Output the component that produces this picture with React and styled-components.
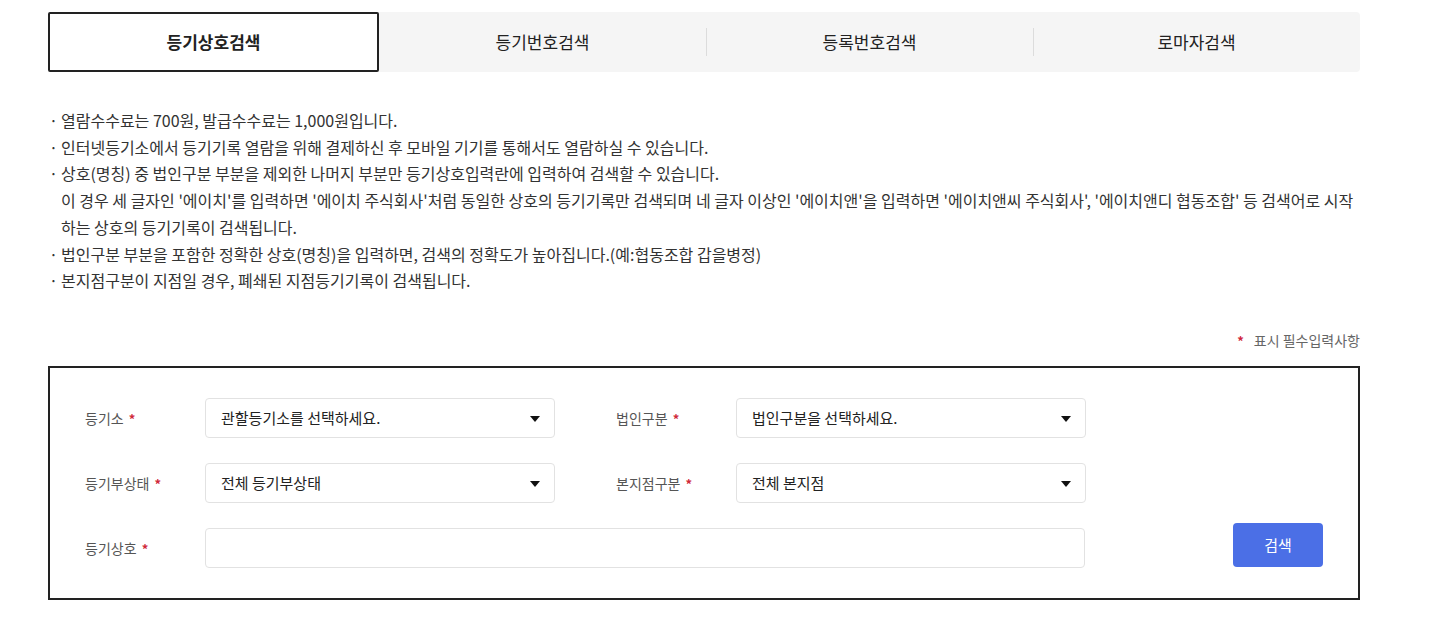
import React from "react";
import styled, { createGlobalStyle } from "styled-components";

const GlobalStyle = createGlobalStyle`
    body {
        margin: 0;
        background: #fff;
        font-family: "Noto Sans CJK KR", "Noto Sans", sans-serif;
        color: #333;
    }
`;

const Page = styled.div`
    width: 1312px;
    padding: 12px 0 0 48px;
`;

const TabBar = styled.div`
    display: flex;
    height: 60px;
    background: #f5f5f5;
    border-radius: 4px;
`;

const Tab = styled.div`
    flex: 1;
    display: flex;
    align-items: center;
    justify-content: center;
    position: relative;
    font-size: 17px;
    color: #222;
    box-sizing: border-box;
    padding-bottom: 2px;
    ${({ $active }) => $active && `
        background: #fff;
        border: 2px solid #222;
        border-radius: 2px;
        font-weight: 700;
        flex: 0 0 331px;
    `}
    ${({ $divider }) => $divider && `
        &::before {
            content: "";
            position: absolute;
            left: 0;
            top: 16px;
            bottom: 16px;
            width: 1px;
            background: #dcdcdc;
        }
    `}
`;

const Notes = styled.ul`
    list-style: none;
    margin: 35px 0 0;
    padding: 0;
    font-size: 16px;
    line-height: 26.7px;
    color: #333;
`;

const Note = styled.li`
    position: relative;
    padding-left: 13px;
    &::before {
        content: "·";
        position: absolute;
        left: 1px;
        top: 0;
    }
`;

const Required = styled.div`
    margin-top: 36px;
    text-align: right;
    font-size: 14px;
    color: #666;
    line-height: 20px;
`;

const Star = styled.span`
    color: #d0293b;
    margin-right: ${({ $gap }) => $gap || 0}px;
    margin-left: ${({ $left }) => $left || 0}px;
    font-size: 13px;
    font-weight: 700;
`;

const FormBox = styled.div`
    margin-top: 15px;
    border: 2px solid #222;
    padding: 30px 35px 30px 35px;
    display: flex;
    align-items: flex-end;
    justify-content: space-between;
`;

const Fields = styled.div`
    display: flex;
    flex-direction: column;
    gap: 25px;
`;

const Row = styled.div`
    display: flex;
    align-items: center;
`;

const Label = styled.div`
    width: 120px;
    font-size: 14px;
    color: #555;
    margin-left: ${({ $offset }) => $offset || 0}px;
`;

const Select = styled.div`
    width: ${({ $w }) => $w}px;
    height: 40px;
    box-sizing: border-box;
    border: 1px solid #e2e2e2;
    border-radius: 4px;
    padding: 0 14px 0 15px;
    display: flex;
    align-items: center;
    justify-content: space-between;
    font-size: 15px;
    color: #222;
`;

const Arrow = styled.span`
    width: 0;
    height: 0;
    border-left: 5px solid transparent;
    border-right: 5px solid transparent;
    border-top: 6px solid #111;
    margin-top: 2px;
`;

const SearchButton = styled.button`
    width: 90px;
    height: 44px;
    border: none;
    border-radius: 4px;
    background: #4b6fe6;
    color: #fff;
    font-family: inherit;
    font-size: 15px;
    transform: translateY(-1px);
`;

const Field = ({ label, offset, value, width, arrow = true }) => (
    <>
        <Label $offset={offset}>
            {label} <Star $left={2}>*</Star>
        </Label>
        <Select $w={width}>
            <span>{value}</span>
            {arrow && <Arrow />}
        </Select>
    </>
);

const App = () => {
    return (
        <Page>
            <GlobalStyle />
            <TabBar>
                <Tab $active>등기상호검색</Tab>
                <Tab>등기번호검색</Tab>
                <Tab $divider>등록번호검색</Tab>
                <Tab $divider>로마자검색</Tab>
            </TabBar>

            <Notes>
                <Note>열람수수료는 700원, 발급수수료는 1,000원입니다.</Note>
                <Note>인터넷등기소에서 등기기록 열람을 위해 결제하신 후 모바일 기기를 통해서도 열람하실 수 있습니다.</Note>
                <Note>
                    상호(명칭) 중 법인구분 부분을 제외한 나머지 부분만 등기상호입력란에 입력하여 검색할 수 있습니다.
                    <br />
                    이 경우 세 글자인 '에이치'를 입력하면 '에이치 주식회사'처럼 동일한 상호의 등기기록만 검색되며 네 글자 이상인 '에이치앤'을 입력하면 '에이치앤씨 주식회사', '에이치앤디 협동조합' 등 검색어로 시작하는 상호의 등기기록이 검색됩니다.
                </Note>
                <Note>법인구분 부분을 포함한 정확한 상호(명칭)을 입력하면, 검색의 정확도가 높아집니다.(예:협동조합 갑을병정)</Note>
                <Note>본지점구분이 지점일 경우, 폐쇄된 지점등기기록이 검색됩니다.</Note>
            </Notes>

            <Required>
                <Star $gap={10}>*</Star>표시 필수입력사항
            </Required>

            <FormBox>
                <Fields>
                    <Row>
                        <Field label="등기소" value="관할등기소를 선택하세요." width={350} />
                        <Field label="법인구분" offset={61} value="법인구분을 선택하세요." width={350} />
                    </Row>
                    <Row>
                        <Field label="등기부상태" value="전체 등기부상태" width={350} />
                        <Field label="본지점구분" offset={61} value="전체 본지점" width={350} />
                    </Row>
                    <Row>
                        <Field label="등기상호" value="" width={880} arrow={false} />
                    </Row>
                </Fields>
                <SearchButton>검색</SearchButton>
            </FormBox>
        </Page>
    );
};

export default App;
